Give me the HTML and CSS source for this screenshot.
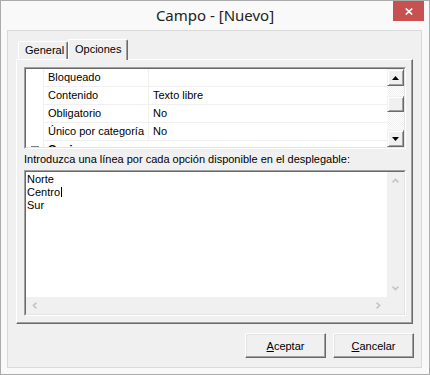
FILE: index.html
```html
<!DOCTYPE html>
<html lang="es">
<head>
  <meta charset="UTF-8" />
  <title>Campo - [Nuevo]</title>
  <link rel="stylesheet" href="styles.css">
</head>
<body>
  <div class="window">
    <div class="titlebar">
      <span class="title">Campo - [Nuevo]</span>
      <div class="close">
        <svg width="8" height="7" viewBox="0 0 8 7"><path d="M0.8 0.5 L7.2 6.5 M7.2 0.5 L0.8 6.5" stroke="#fff" stroke-width="1.7"/></svg>
      </div>
    </div>

    <div class="client">
      <div class="tabs">
        <div class="tab">General</div>
        <div class="tab active">Opciones</div>
      </div>

      <div class="panel">
        <div class="sunken grid">
          <div class="sunken-inner">
            <div class="rows">
              <div class="row"><div class="gutter"></div><div class="name">Bloqueado</div><div class="value"></div></div>
              <div class="row"><div class="gutter"></div><div class="name">Contenido</div><div class="value">Texto libre</div></div>
              <div class="row"><div class="gutter"></div><div class="name">Obligatorio</div><div class="value">No</div></div>
              <div class="row"><div class="gutter"></div><div class="name">Único por categoría</div><div class="value">No</div></div>
              <div class="row category"><div class="gutter"><span class="expander"></span></div><div class="name">Opciones</div><div class="value"></div></div>
            </div>
            <div class="classic-vbar">
              <div class="classic-btn">
                <svg width="7" height="4" viewBox="0 0 7 4"><path d="M3.5 0 L7 4 L0 4 Z" fill="#000"/></svg>
              </div>
              <div class="track">
                <div class="thumb"></div>
              </div>
              <div class="classic-btn">
                <svg width="7" height="4" viewBox="0 0 7 4"><path d="M0 0 L7 0 L3.5 4 Z" fill="#000"/></svg>
              </div>
            </div>
          </div>
        </div>

        <div class="hint">Introduzca una línea por cada opción disponible en el desplegable:</div>

        <div class="sunken memo">
          <div class="sunken-inner memo-inner">
            <div class="memo-main">
              <div class="memo-text">Norte<br>Centro<span class="caret"></span><br>Sur</div>
              <div class="flat-vbar">
                <div class="flat-btn">
                  <svg width="7" height="5" viewBox="0 0 7 5"><polyline points="0.6,4.4 3.5,1.4 6.4,4.4" fill="none" stroke="#c4c4c4" stroke-width="1.6"/></svg>
                </div>
                <div class="flat-btn">
                  <svg width="7" height="5" viewBox="0 0 7 5"><polyline points="0.6,0.6 3.5,3.6 6.4,0.6" fill="none" stroke="#c4c4c4" stroke-width="1.6"/></svg>
                </div>
              </div>
            </div>
            <div class="flat-hbar">
              <div class="flat-btn">
                <svg width="5" height="7" viewBox="0 0 5 7"><polyline points="4.4,0.6 1.4,3.5 4.4,6.4" fill="none" stroke="#c4c4c4" stroke-width="1.6"/></svg>
              </div>
              <div class="flat-btn">
                <svg width="5" height="7" viewBox="0 0 5 7"><polyline points="0.6,0.6 3.6,3.5 0.6,6.4" fill="none" stroke="#c4c4c4" stroke-width="1.6"/></svg>
              </div>
              <div class="corner"></div>
            </div>
          </div>
        </div>
      </div>

      <div class="buttons">
        <button type="button"><u>A</u>ceptar</button>
        <button type="button"><u>C</u>ancelar</button>
      </div>
    </div>
  </div>
</body>
</html>
```

FILE: styles.css
```css
* {
  box-sizing: border-box;
}
body {
  margin: 0;
  font-family: "Liberation Sans", Arial, sans-serif;
  font-size: 11px;
  color: #000;
  background: #fff;
}
.window {
  width: 430px;
  height: 375px;
  border: 1px solid #ababab;
  background: #f9f9f9;
  display: flex;
  flex-direction: column;
}
.titlebar {
  height: 29px;
  display: grid;
  grid-template-columns: 1fr auto 1fr;
  align-items: start;
}
.title {
  grid-column: 2;
  font-family: "Noto Sans", "Open Sans", sans-serif;
  font-size: 15px;
  line-height: 29px;
  color: #222;
}
.close {
  grid-column: 3;
  justify-self: end;
  margin-right: 5px;
  width: 31px;
  height: 20px;
  background: #c75050;
  display: flex;
  align-items: center;
  justify-content: center;
}
.client {
  margin: 0 7px 6px 6px;
  height: 338px;
  border: 1px solid #d9d9d9;
  background: #f0f0f0;
  padding: 8px 8px 0;
}

/* tabs */
.tabs {
  display: flex;
  align-items: flex-end;
  height: 20px;
  padding-left: 2px;
}
.tab {
  width: 50px;
  height: 18px;
  padding: 2px 0 0 6px;
  line-height: 13px;
  white-space: nowrap;
  border-top: 1px solid #fff;
  border-left: 1px solid #fff;
  border-right: 1px solid #696969;
  box-shadow: inset -1px 0 #a0a0a0;
  border-radius: 2px 2px 0 0;
}
.tab.active {
  position: relative;
  width: 60px;
  height: 21px;
  margin-bottom: -1px;
  padding: 3px 0 0 6px;
  background: #f0f0f0;
}
.panel {
  height: 265px;
  border: 1px solid #696969;
  border-top-color: #fff;
  border-left-color: #fff;
  box-shadow: inset -1px -1px #a0a0a0;
  padding: 7px 6px 0 7px;
}

/* sunken boxes */
.sunken {
  border: 1px solid;
  border-color: #a0a0a0 #fff #fff #a0a0a0;
}
.sunken-inner {
  height: 100%;
  border: 1px solid;
  border-color: #696969 #e3e3e3 #e3e3e3 #696969;
}

/* property grid */
.grid {
  height: 82px;
}
.grid .sunken-inner {
  display: flex;
}
.rows {
  flex: 1;
  background: #fff;
  overflow: hidden;
}
.row {
  display: flex;
  height: 18px;
  line-height: 17px;
}
.gutter {
  width: 18px;
  border-right: 1px solid #f0f0f0;
  display: flex;
  justify-content: center;
  padding-top: 5px;
}
.name {
  width: 105px;
  padding-left: 4px;
  border-right: 1px solid #f0f0f0;
  border-bottom: 1px solid #f0f0f0;
  white-space: nowrap;
}
.value {
  flex: 1;
  padding-left: 4px;
  border-bottom: 1px solid #f0f0f0;
}
.category .name {
  font-weight: bold;
  border-right: none;
}
.expander {
  width: 8px;
  height: 8px;
  border: 1px solid #808080;
}
.classic-vbar {
  width: 17px;
  display: flex;
  flex-direction: column;
}
.classic-btn {
  height: 17px;
  background: #f0f0f0;
  border: 1px solid;
  border-color: #f0f0f0 #696969 #696969 #f0f0f0;
  box-shadow: inset 1px 1px #fff, inset -1px -1px #a0a0a0;
  display: flex;
  align-items: center;
  justify-content: center;
}
.track {
  flex: 1;
  padding-top: 10px;
  background: repeating-conic-gradient(#f0f0f0 0 25%, #fff 0 50%) 0 0 / 2px 2px;
}
.thumb {
  height: 16px;
  background: #f0f0f0;
  border: 1px solid;
  border-color: #f0f0f0 #696969 #696969 #f0f0f0;
  box-shadow: inset 1px 1px #fff, inset -1px -1px #a0a0a0;
}

.hint {
  line-height: 13px;
  margin: 4px 0 4px;
  white-space: nowrap;
}

/* memo */
.memo {
  height: 146px;
}
.memo-inner {
  display: flex;
  flex-direction: column;
}
.memo-main {
  flex: 1;
  display: flex;
}
.memo-text {
  flex: 1;
  background: #fff;
  padding: 1px 0 0 1px;
  line-height: 13px;
}
.caret {
  display: inline-block;
  width: 1px;
  height: 10px;
  margin-left: 1px;
  background: #000;
  vertical-align: -1px;
}
.flat-vbar {
  width: 17px;
  background: #f0f0f0;
  display: flex;
  flex-direction: column;
  justify-content: space-between;
}
.flat-hbar {
  height: 17px;
  background: #f0f0f0;
  display: flex;
}
.flat-btn {
  width: 17px;
  height: 17px;
  display: flex;
  align-items: center;
  justify-content: center;
}
.flat-hbar .flat-btn:first-child {
  margin-right: auto;
}
.corner {
  width: 17px;
}

/* buttons */
.buttons {
  display: flex;
  justify-content: flex-end;
  gap: 7px;
  margin: 9px -1px 0 0;
}
button {
  width: 81px;
  height: 25px;
  padding: 0;
  font-family: "Liberation Sans", Arial, sans-serif;
  font-size: 11px;
  color: #000;
  background: #f0f0f0;
  border: 1px solid;
  border-color: #fff #696969 #696969 #fff;
  box-shadow: inset -1px -1px #a0a0a0, inset 1px 1px #e3e3e3;
}
```
